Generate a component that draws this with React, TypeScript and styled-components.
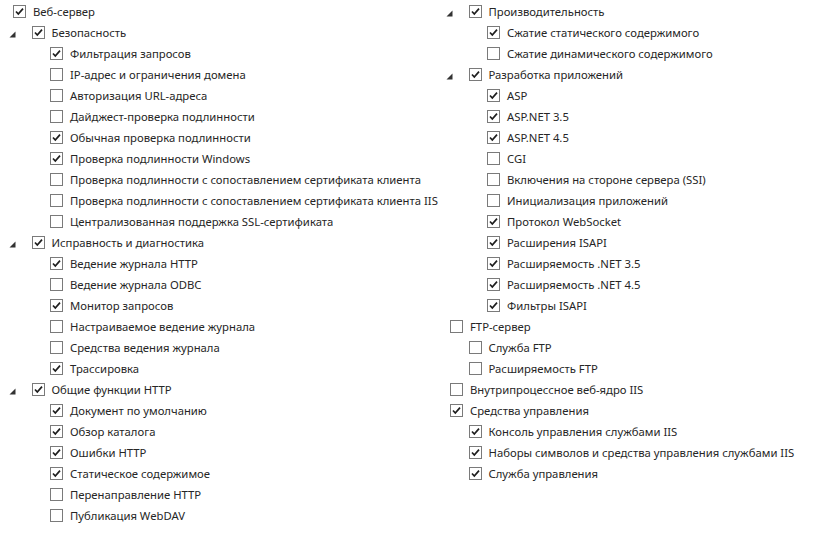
import styled, { createGlobalStyle } from "styled-components";

const GlobalStyle = createGlobalStyle`
  html, body {
    margin: 0;
    padding: 0;
    background: #ffffff;
  }
  body {
    font-family: "Noto Sans", "Open Sans", sans-serif;
    font-size: 11.3px;
    color: #262626;
  }
`;

type Item = {
  label: string;
  level: number;
  checked: boolean;
  expander?: boolean;
};

const leftItems: Item[] = [
  { label: "Веб-сервер", level: 0, checked: true },
  { label: "Безопасность", level: 1, checked: true, expander: true },
  { label: "Фильтрация запросов", level: 2, checked: true },
  { label: "IP-адрес и ограничения домена", level: 2, checked: false },
  { label: "Авторизация URL-адреса", level: 2, checked: false },
  { label: "Дайджест-проверка подлинности", level: 2, checked: false },
  { label: "Обычная проверка подлинности", level: 2, checked: true },
  { label: "Проверка подлинности Windows", level: 2, checked: true },
  { label: "Проверка подлинности с сопоставлением сертификата клиента", level: 2, checked: false },
  { label: "Проверка подлинности с сопоставлением сертификата клиента IIS", level: 2, checked: false },
  { label: "Централизованная поддержка SSL-сертификата", level: 2, checked: false },
  { label: "Исправность и диагностика", level: 1, checked: true, expander: true },
  { label: "Ведение журнала HTTP", level: 2, checked: true },
  { label: "Ведение журнала ODBC", level: 2, checked: false },
  { label: "Монитор запросов", level: 2, checked: true },
  { label: "Настраиваемое ведение журнала", level: 2, checked: false },
  { label: "Средства ведения журнала", level: 2, checked: false },
  { label: "Трассировка", level: 2, checked: true },
  { label: "Общие функции HTTP", level: 1, checked: true, expander: true },
  { label: "Документ по умолчанию", level: 2, checked: true },
  { label: "Обзор каталога", level: 2, checked: true },
  { label: "Ошибки HTTP", level: 2, checked: true },
  { label: "Статическое содержимое", level: 2, checked: true },
  { label: "Перенаправление HTTP", level: 2, checked: false },
  { label: "Публикация WebDAV", level: 2, checked: false },
];

const rightItems: Item[] = [
  { label: "Производительность", level: 1, checked: true, expander: true },
  { label: "Сжатие статического содержимого", level: 2, checked: true },
  { label: "Сжатие динамического содержимого", level: 2, checked: false },
  { label: "Разработка приложений", level: 1, checked: true, expander: true },
  { label: "ASP", level: 2, checked: true },
  { label: "ASP.NET 3.5", level: 2, checked: true },
  { label: "ASP.NET 4.5", level: 2, checked: true },
  { label: "CGI", level: 2, checked: false },
  { label: "Включения на стороне сервера (SSI)", level: 2, checked: false },
  { label: "Инициализация приложений", level: 2, checked: false },
  { label: "Протокол WebSocket", level: 2, checked: true },
  { label: "Расширения ISAPI", level: 2, checked: true },
  { label: "Расширяемость .NET 3.5", level: 2, checked: true },
  { label: "Расширяемость .NET 4.5", level: 2, checked: true },
  { label: "Фильтры ISAPI", level: 2, checked: true },
  { label: "FTP-сервер", level: 0, checked: false },
  { label: "Служба FTP", level: 1, checked: false },
  { label: "Расширяемость FTP", level: 1, checked: false },
  { label: "Внутрипроцессное веб-ядро IIS", level: 0, checked: false },
  { label: "Средства управления", level: 0, checked: true },
  { label: "Консоль управления службами IIS", level: 1, checked: true },
  { label: "Наборы символов и средства управления службами IIS", level: 1, checked: true },
  { label: "Служба управления", level: 1, checked: true },
];

const App = () => {
  return (
    <>
      <GlobalStyle />
      <Page>
        <Column $width={437}>
          {leftItems.map((item, i) => (
            <TreeRow key={i} item={item} />
          ))}
        </Column>
        <Column $width={377}>
          {rightItems.map((item, i) => (
            <TreeRow key={i} item={item} />
          ))}
        </Column>
      </Page>
    </>
  );
};

const TreeRow = ({ item }: { item: Item }) => (
  <Row $level={item.level}>
    <Twisty>
      {item.expander && (
        <svg width="7" height="7" viewBox="0 0 7 7">
          <polygon points="0.5,6.5 6.5,6.5 6.5,0.5" fill="#333" />
        </svg>
      )}
    </Twisty>
    <Box>
      {item.checked && (
        <svg width="11" height="11" viewBox="0 0 11 11">
          <polyline
            points="2,5.5 4.3,8 9,2.6"
            fill="none"
            stroke="#1e1e1e"
            strokeWidth="1.7"
          />
        </svg>
      )}
    </Box>
    <Label>{item.label}</Label>
  </Row>
);

export default App;

const Page = styled.div`
  display: flex;
  padding-top: 1px;
  width: 814px;
  height: 535px;
  box-sizing: border-box;
  overflow: hidden;
`;

const Column = styled.div<{ $width: number }>`
  width: ${(p) => p.$width}px;
  flex-shrink: 0;
`;

const Row = styled.div<{ $level: number }>`
  display: flex;
  align-items: center;
  height: 21px;
  padding-left: ${(p) => 13 + p.$level * 18.5}px;
  white-space: nowrap;
`;

const Twisty = styled.span`
  display: flex;
  flex-shrink: 0;
  width: 7px;
  height: 7px;
  margin-left: -23px;
  margin-right: 16px;
  margin-top: 3px;
`;

const Box = styled.span`
  display: flex;
  align-items: center;
  justify-content: center;
  width: 13px;
  height: 13px;
  box-sizing: border-box;
  border: 1px solid #7a7a7a;
  background: #fff;
  flex-shrink: 0;
`;

const Label = styled.span`
  flex-shrink: 0;
  margin-left: 7px;
  line-height: 21px;
`;
